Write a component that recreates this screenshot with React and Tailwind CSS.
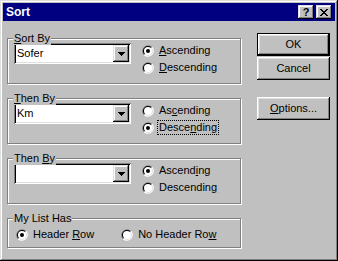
import React from "react";

const raised =
  "shadow-[inset_-1px_-1px_#000,inset_1px_1px_#dfdfdf,inset_-2px_-2px_#808080,inset_2px_2px_#fff]";
const buttonRaised =
  "shadow-[inset_-1px_-1px_#000,inset_1px_1px_#fff,inset_-2px_-2px_#808080,inset_2px_2px_#dfdfdf]";

const Radio = ({ checked }) => (
  <svg width="12" height="12" viewBox="0 0 12 12" className="shrink-0">
    <path d="M1.76 10.24A6 6 0 0 1 10.24 1.76Z" fill="#808080" />
    <path d="M1.76 10.24A6 6 0 0 0 10.24 1.76Z" fill="#fff" />
    <path d="M2.46 9.54A5 5 0 0 1 9.54 2.46Z" fill="#000" />
    <path d="M2.46 9.54A5 5 0 0 0 9.54 2.46Z" fill="#dfdfdf" />
    <circle cx="6" cy="6" r="4" fill="#fff" />
    {checked && <circle cx="6" cy="6" r="2" fill="#000" />}
  </svg>
);

const Arrow = () => (
  <svg width="7" height="4" viewBox="0 0 7 4" shapeRendering="crispEdges">
    <path d="M0 0h7v1H0zM1 1h5v1H1zM2 2h3v1H2zM3 3h1v1H3z" fill="#000" />
  </svg>
);

const RadioRow = ({ checked, focused, children }) => (
  <div className="flex items-center h-[15px]">
    <Radio checked={checked} />
    <span
      className={`ml-[3px] px-[1px] leading-[13px] border ${
        focused ? "border-dotted border-black" : "border-transparent"
      }`}
    >
      {children}
    </span>
  </div>
);

const Combo = ({ value }) => (
  <div className="w-[117px] h-[21px] bg-white p-[2px] flex shadow-[inset_1px_1px_#808080,inset_-1px_-1px_#fff,inset_2px_2px_#000,inset_-2px_-2px_#dfdfdf]">
    <div className="flex-1 pl-[1px] leading-[17px]">{value}</div>
    <div className={`w-[16px] h-[17px] bg-[#c0c0c0] flex items-center justify-center ${raised}`}>
      <Arrow />
    </div>
  </div>
);

const Group = ({ label, className, children }) => (
  <div
    className={`relative border border-[#808080] shadow-[inset_1px_1px_#fff,1px_1px_#fff] ${className}`}
  >
    <span className="absolute left-[5px] top-[-7px] px-[1px] bg-[#c0c0c0] leading-[13px]">{label}</span>
    {children}
  </div>
);

const SortGroup = ({ label, value, asc, focusDesc, ascLabel, descLabel, className }) => (
  <Group label={label} className={`h-[46px] pl-[6px] pt-[4px] flex items-start ${className}`}>
    <Combo value={value} />
    <div className="ml-[11px] flex flex-col gap-[2px]">
      <RadioRow checked={asc}>{ascLabel}</RadioRow>
      <RadioRow checked={!asc} focused={focusDesc}>
        {descLabel}
      </RadioRow>
    </div>
  </Group>
);

const PushButton = ({ isDefault, children, className }) => (
  <div
    className={`w-[73px] h-[23px] flex items-center justify-center ${
      isDefault ? "border border-black" : ""
    } ${buttonRaised} ${className}`}
  >
    {children}
  </div>
);

export default function App() {
  return (
    <div className="w-[338px] h-[261px] bg-[#c0c0c0] p-[3px] flex flex-col text-[11px] text-black font-['Liberation_Sans',Arial,sans-serif] shadow-[inset_-1px_-1px_#000,inset_1px_1px_#dfdfdf,inset_-2px_-2px_#808080,inset_2px_2px_#fff]">
      {/* Title bar */}
      <div className="h-[18px] bg-[#000080] flex items-center pl-[3px] pr-[3px]">
        <span className="text-white font-bold text-[12px] leading-[18px]">Sort</span>
        <div className="ml-auto flex gap-[2px]">
          <div className={`w-[16px] h-[14px] bg-[#c0c0c0] flex items-center justify-center font-bold text-[11px] leading-[14px] ${raised}`}>
            ?
          </div>
          <div className={`w-[16px] h-[14px] bg-[#c0c0c0] flex items-center justify-center ${raised}`}>
            <svg width="8" height="7" viewBox="0 0 8 7" shapeRendering="crispEdges">
              <path
                d="M0 0h2v1H0zM6 0h2v1H6zM1 1h2v1H1zM5 1h2v1H5zM2 2h4v1H2zM3 3h2v1H3zM2 4h4v1H2zM1 5h2v1H1zM5 5h2v1H5zM0 6h2v1H0zM6 6h2v1H6z"
                fill="#000"
              />
            </svg>
          </div>
        </div>
      </div>

      {/* Body */}
      <div className="flex pl-[4px]">
        <div className="w-[234px] pt-[17px] flex flex-col">
          <SortGroup
            label={<><u>S</u>ort By</>}
            value="Sofer"
            asc
            ascLabel={<><u>A</u>scending</>}
            descLabel={<><u>D</u>escending</>}
          />
          <SortGroup
            className="mt-[14px]"
            label={<><u>T</u>hen By</>}
            value="Km"
            asc={false}
            focusDesc
            ascLabel={<>As<u>c</u>ending</>}
            descLabel={<>Desce<u>n</u>ding</>}
          />
          <SortGroup
            className="mt-[14px]"
            label={<>Then <u>B</u>y</>}
            value=""
            asc
            ascLabel={<>Ascend<u>i</u>ng</>}
            descLabel={<>Descendin<u>g</u></>}
          />
          <Group label="My List Has" className="mt-[14px] h-[30px] pl-[8px] pt-[8px] flex items-start">
            <RadioRow checked>
              Header <u>R</u>ow
            </RadioRow>
            <div className="ml-[25px]">
              <RadioRow>
                No Header Ro<u>w</u>
              </RadioRow>
            </div>
          </Group>
        </div>

        <div className="ml-[16px] pt-[12px] flex flex-col">
          <PushButton isDefault>OK</PushButton>
          <PushButton className="mt-[1px]">Cancel</PushButton>
          <PushButton className="mt-[17px]">
            <span>
              <u>O</u>ptions...
            </span>
          </PushButton>
        </div>
      </div>
    </div>
  );
}
